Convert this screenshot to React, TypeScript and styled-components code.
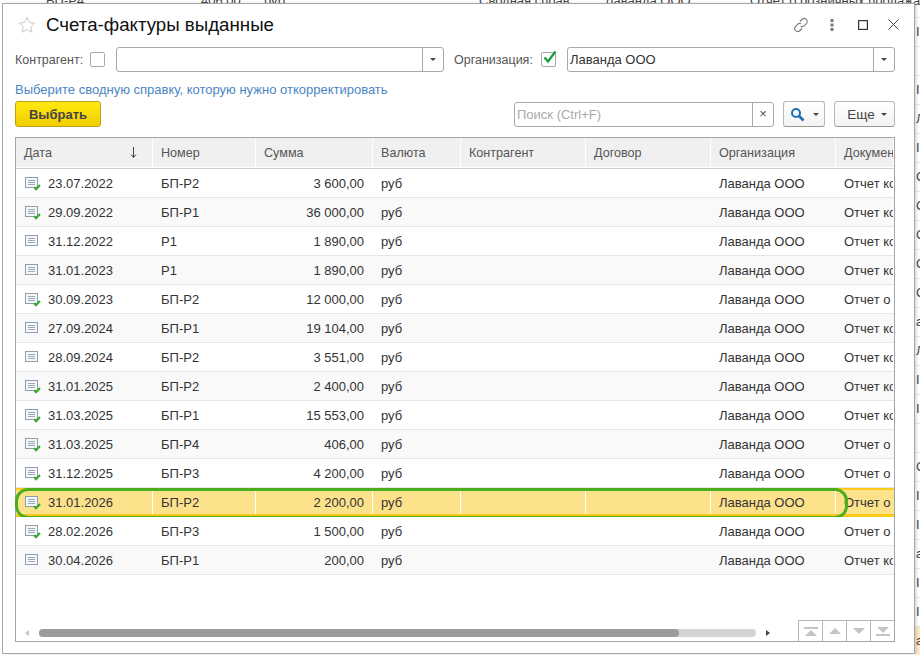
import styled, { createGlobalStyle } from "styled-components";

const GlobalStyle = createGlobalStyle`
  html, body {
    margin: 0;
    padding: 0;
    width: 920px;
    height: 655px;
    overflow: hidden;
    background: #fff;
    font-family: "Liberation Sans", Arial, sans-serif;
    font-size: 13px;
    color: #333;
  }
`;

const columns = [137, 103, 117, 88, 125, 125, 125, 58];

const rows = [
  { date: "23.07.2022", num: "БП-Р2", sum: "3 600,00", doc: "Отчет ко", posted: true },
  { date: "29.09.2022", num: "БП-Р1", sum: "36 000,00", doc: "Отчет ко", posted: true },
  { date: "31.12.2022", num: "Р1", sum: "1 890,00", doc: "Отчет ко", posted: false },
  { date: "31.01.2023", num: "Р1", sum: "1 890,00", doc: "Отчет ко", posted: false },
  { date: "30.09.2023", num: "БП-Р2", sum: "12 000,00", doc: "Отчет о", posted: true },
  { date: "27.09.2024", num: "БП-Р1", sum: "19 104,00", doc: "Отчет ко", posted: false },
  { date: "28.09.2024", num: "БП-Р2", sum: "3 551,00", doc: "Отчет ко", posted: false },
  { date: "31.01.2025", num: "БП-Р2", sum: "2 400,00", doc: "Отчет ко", posted: true },
  { date: "31.03.2025", num: "БП-Р1", sum: "15 553,00", doc: "Отчет ко", posted: true },
  { date: "31.03.2025", num: "БП-Р4", sum: "406,00", doc: "Отчет о", posted: true },
  { date: "31.12.2025", num: "БП-Р3", sum: "4 200,00", doc: "Отчет о", posted: true },
  { date: "31.01.2026", num: "БП-Р2", sum: "2 200,00", doc: "Отчет о", posted: true, selected: true },
  { date: "28.02.2026", num: "БП-Р3", sum: "1 500,00", doc: "Отчет о", posted: true },
  { date: "30.04.2026", num: "БП-Р1", sum: "200,00", doc: "Отчет ко", posted: false },
];

const sheetEdge = ["", "I,", "", "I,", "Л", "I,", "С", "С", "С", "С", "С", "а", "Л", "I,", "I,", "", "С", "I,", "I,", "а", "I,", "I,", "а"];

function DocIcon({ posted }: { posted: boolean }) {
  return (
    <svg width="16" height="14" viewBox="0 0 16 14">
      <rect x="0.5" y="0.5" width="12" height="10" fill="#f5f7f9" stroke="#8e9db0" />
      <path d="M3 3.5h7M3 5.5h7M3 7.5h7" stroke="#9aa8b8" />
      {posted && <path d="M9.2 10.2l1.8 2L15 8" fill="none" stroke="#35a82a" strokeWidth="2" />}
    </svg>
  );
}

function NavTriangle({ up }: { up?: boolean }) {
  return (
    <svg width="12" height="6" viewBox="0 0 12 6">
      <path d={up ? "M0 6L6 0L12 6Z" : "M0 0L6 6L12 0Z"} fill="currentColor" />
    </svg>
  );
}

function App() {
  return (
    <>
      <GlobalStyle />
      <Desktop>
        <SheetRow>
          <SheetCell $w={46} />
          <SheetCell $w={155}>БП-Р4</SheetCell>
          <SheetCell $w={63}>406,00</SheetCell>
          <SheetCell $w={215}>руб</SheetCell>
          <SheetCell $w={126}>Сводная справ</SheetCell>
          <SheetCell $w={145}>Лаванда ООО</SheetCell>
          <SheetCell $w={170}>Отчет о розничных продажа</SheetCell>
        </SheetRow>
        <SheetEdge>
          {sheetEdge.map((text, i) => (
            <EdgeCell key={i} $hot={i === 22}>
              {text}
            </EdgeCell>
          ))}
        </SheetEdge>
        <Window>
          <TitleBar>
            <StarIcon width="18" height="18" viewBox="0 0 18 18">
              <path
                d="M9 1.5l2.3 5 5.4.6-4 3.7 1.1 5.4L9 13.5l-4.8 2.7 1.1-5.4-4-3.7 5.4-.6z"
                fill="none"
                stroke="#c9c9c9"
              />
            </StarIcon>
            <Title>Счета-фактуры выданные</Title>
            <TitleIcons>
              <TitleIcon>
                <svg width="16" height="16" viewBox="0 0 16 16" fill="none" stroke="#777" strokeWidth="1.1">
                  <path d="M7 4.5l2-2a3 3 0 0 1 4.4 4.2l-2 2a3 3 0 0 1-3.6.5" />
                  <path d="M9 11.5l-2 2a3 3 0 0 1-4.4-4.2l2-2a3 3 0 0 1 3.6-.5" />
                </svg>
              </TitleIcon>
              <TitleIcon>
                <svg width="4" height="12" viewBox="0 0 4 12" fill="#777">
                  <rect x="0.5" y="0" width="3" height="3" />
                  <rect x="0.5" y="4.5" width="3" height="3" />
                  <rect x="0.5" y="9" width="3" height="3" />
                </svg>
              </TitleIcon>
              <TitleIcon>
                <svg width="10" height="10" viewBox="0 0 10 10" fill="none" stroke="#333" strokeWidth="1.2">
                  <rect x="0.6" y="0.6" width="8.8" height="8.8" />
                </svg>
              </TitleIcon>
              <TitleIcon>
                <svg width="11" height="11" viewBox="0 0 11 11" fill="none" stroke="#444" strokeWidth="1">
                  <path d="M0.5 0.5l10 10M10.5 0.5l-10 10" />
                </svg>
              </TitleIcon>
            </TitleIcons>
          </TitleBar>

          <FilterRow>
            <FieldLabel $w={75}>Контрагент:</FieldLabel>
            <CheckBox />
            <ComboBox>
              <ComboValue />
              <ComboArrow>
                <SmallCaret />
              </ComboArrow>
            </ComboBox>
            <FieldLabel $w={87} $ml={10}>
              Организация:
            </FieldLabel>
            <CheckBox>
              <CheckMark width="16" height="15" viewBox="0 0 16 15">
                <path d="M2.5 7.5l3.5 4L13.5 1.5" fill="none" stroke="#0f9d3a" strokeWidth="2.2" />
              </CheckMark>
            </CheckBox>
            <ComboBox>
              <ComboValue>Лаванда ООО</ComboValue>
              <ComboArrow>
                <SmallCaret />
              </ComboArrow>
            </ComboBox>
          </FilterRow>

          <Hint>Выберите сводную справку, которую нужно откорректировать</Hint>

          <Toolbar>
            <PrimaryButton>Выбрать</PrimaryButton>
            <SearchBox>
              <SearchInput>Поиск (Ctrl+F)</SearchInput>
              <SearchClear>×</SearchClear>
            </SearchBox>
            <ToolButton $w={42}>
              <svg width="15" height="15" viewBox="0 0 15 15" fill="none" stroke="#1f6fb5">
                <circle cx="6" cy="6" r="4" strokeWidth="2" />
                <path d="M9 9l4.5 4.5" strokeWidth="2.6" />
              </svg>
              <SmallCaret />
            </ToolButton>
            <ToolButton $w={61} $pl={5}>
              Еще
              <SmallCaret />
            </ToolButton>
          </Toolbar>

          <Table>
            <HeaderRow>
              {["Дата", "Номер", "Сумма", "Валюта", "Контрагент", "Договор", "Организация", "Документ"].map((h, i) => (
                <HeaderCell key={h} $w={columns[i]}>
                  {h}
                  {i === 0 && (
                    <SortArrow width="7" height="11" viewBox="0 0 7 11" fill="none" stroke="#444">
                      <path d="M3.5 0v10M1 7.5l2.5 3 2.5-3" />
                    </SortArrow>
                  )}
                </HeaderCell>
              ))}
            </HeaderRow>
            <Body>
              {rows.map((r, i) => (
                <Row key={i} $alt={i % 2 === 1} $selected={r.selected}>
                  <Cell $w={columns[0]} $selected={r.selected}>
                    <RowIcon>
                      <DocIcon posted={r.posted} />
                    </RowIcon>
                    {r.date}
                  </Cell>
                  <Cell $w={columns[1]} $selected={r.selected}>
                    {r.num}
                  </Cell>
                  <Cell $w={columns[2]} $selected={r.selected} $right>
                    {r.sum}
                  </Cell>
                  <Cell $w={columns[3]} $selected={r.selected}>
                    руб
                  </Cell>
                  <Cell $w={columns[4]} $selected={r.selected} />
                  <Cell $w={columns[5]} $selected={r.selected} />
                  <Cell $w={columns[6]} $selected={r.selected}>
                    Лаванда ООО
                  </Cell>
                  <Cell $w={columns[7]}>{r.doc}</Cell>
                  {r.selected && <SelectionMark />}
                </Row>
              ))}
            </Body>
            <Footer>
              <ScrollLeft />
              <ScrollTrack>
                <ScrollThumb />
              </ScrollTrack>
              <ScrollRight />
              <NavGroup>
                <NavButton>
                  <NavBar />
                  <NavTriangle up />
                </NavButton>
                <NavButton>
                  <NavTriangle up />
                </NavButton>
                <NavButton>
                  <NavTriangle />
                </NavButton>
                <NavButton>
                  <NavTriangle />
                  <NavBar />
                </NavButton>
              </NavGroup>
            </Footer>
          </Table>
        </Window>
      </Desktop>
    </>
  );
}

export default App;

const Desktop = styled.div`
  position: relative;
  width: 920px;
  height: 655px;
  overflow: hidden;
  background: #fff;
`;

const SheetRow = styled.div`
  display: flex;
  height: 3px;
  line-height: 0;
  color: #444;
  white-space: nowrap;
`;

const SheetCell = styled.div<{ $w: number }>`
  flex: 0 0 ${(p) => p.$w}px;
  margin-top: 1px;
`;

const SheetEdge = styled.div`
  position: absolute;
  left: 915px;
  top: -11px;
  width: 5px;
  overflow: hidden;
`;

const EdgeCell = styled.div<{ $hot?: boolean }>`
  height: 28px;
  line-height: 28px;
  padding-left: 1px;
  border-bottom: 1px solid #e6e6e6;
  color: #444;
  background: ${(p) => (p.$hot ? "#fbe9c8" : "transparent")};
`;

const Window = styled.div`
  position: absolute;
  left: 2px;
  top: 3px;
  width: 913px;
  height: 651px;
  box-sizing: border-box;
  display: flex;
  flex-direction: column;
  padding-left: 12px;
  background: #fff;
  border: 1px solid #a6a6a6;
  box-shadow: 2px 0 2px rgba(0, 0, 0, 0.12);
`;

const TitleBar = styled.div`
  display: flex;
  align-items: center;
  height: 43px;
  padding-bottom: 2px;
  box-sizing: border-box;
  flex: none;
`;

const StarIcon = styled.svg`
  margin-left: 3px;
  flex: none;
`;

const Title = styled.h1`
  margin: 0 0 0 10px;
  font-size: 18.7px;
  font-weight: 400;
  color: #111;
`;

const TitleIcons = styled.div`
  margin-left: auto;
  margin-right: 5px;
  display: flex;
  align-items: center;
`;

const TitleIcon = styled.span`
  display: flex;
  align-items: center;
  justify-content: center;
  width: 31px;
`;

const FilterRow = styled.div`
  display: flex;
  align-items: center;
  height: 25px;
  flex: none;
`;

const FieldLabel = styled.label<{ $w: number; $ml?: number }>`
  flex: none;
  width: ${(p) => p.$w}px;
  margin-left: ${(p) => p.$ml ?? 0}px;
  font-size: 12.5px;
  color: #555;
`;

const CheckBox = styled.span`
  position: relative;
  width: 13px;
  height: 13px;
  flex: none;
  background: #fff;
  border: 1px solid #a9a9a9;
  border-radius: 2px;
`;

const CheckMark = styled.svg`
  position: absolute;
  left: 0;
  top: -3px;
`;

const ComboBox = styled.div`
  display: flex;
  width: 328px;
  height: 25px;
  margin-left: 11px;
  box-sizing: border-box;
  background: #fff;
  border: 1px solid #a9a9a9;
  border-radius: 3px;
`;

const ComboValue = styled.div`
  flex: 1;
  padding-left: 2px;
  line-height: 23px;
  color: #333;
`;

const ComboArrow = styled.div`
  width: 20px;
  display: flex;
  align-items: center;
  justify-content: center;
  border-left: 1px solid #a9a9a9;
`;

const SmallCaret = styled.span`
  width: 0;
  height: 0;
  border-left: 3.5px solid transparent;
  border-right: 3.5px solid transparent;
  border-top: 3.5px solid #444;
`;

const Hint = styled.div`
  flex: none;
  height: 29px;
  line-height: 35px;
  color: #4c85c4;
`;

const Toolbar = styled.div`
  display: flex;
  align-items: center;
  height: 26px;
  flex: none;
  margin-right: 19px;
`;

const PrimaryButton = styled.button`
  width: 86px;
  height: 26px;
  padding: 0;
  font: bold 13px "Liberation Sans", Arial, sans-serif;
  color: #444;
  background: linear-gradient(#ffe90f, #f2cd00);
  border: 1px solid #b8a01e;
  border-radius: 3px;
`;

const SearchBox = styled.div`
  display: flex;
  width: 260px;
  height: 25px;
  margin-left: auto;
  box-sizing: border-box;
  border: 1px solid #a9a9a9;
  border-radius: 3px;
`;

const SearchInput = styled.div`
  flex: 1;
  padding-left: 2px;
  line-height: 23px;
  color: #a9a9a9;
`;

const SearchClear = styled.div`
  width: 20px;
  text-align: center;
  line-height: 21px;
  color: #555;
  border-left: 1px solid #a9a9a9;
`;

const ToolButton = styled.button<{ $w: number; $pl?: number }>`
  display: flex;
  align-items: center;
  justify-content: center;
  gap: ${(p) => (p.$pl ? 6 : 8)}px;
  width: ${(p) => p.$w}px;
  height: 26px;
  margin-left: 9px;
  padding: 0 0 0 ${(p) => p.$pl ?? 0}px;
  font: 13.5px "Liberation Sans", Arial, sans-serif;
  color: #444;
  background: linear-gradient(#fff, #f3f3f3);
  border: 1px solid #b9b9b9;
  border-bottom-color: #999;
  border-radius: 3px;
`;

const Table = styled.div`
  display: flex;
  flex-direction: column;
  width: 878px;
  height: 503px;
  margin-top: 10px;
  flex: none;
  border: 1px solid #a6a6a6;
`;

const HeaderRow = styled.div`
  display: flex;
  height: 30px;
  flex: none;
  border-bottom: 1px solid #cfcfcf;
`;

const HeaderCell = styled.div<{ $w: number }>`
  position: relative;
  flex: 0 0 ${(p) => p.$w}px;
  box-sizing: border-box;
  padding-left: 8px;
  font-size: 12.6px;
  line-height: 30px;
  white-space: nowrap;
  overflow: hidden;
  color: #555;
  background: #f0f0f0;
  border-right: 1px solid #fff;
  border-bottom: 1px solid #fff;
`;

const SortArrow = styled.svg`
  position: absolute;
  right: 15px;
  top: 9px;
`;

const Body = styled.div`
  flex: 1;
`;

const Row = styled.div<{ $alt?: boolean; $selected?: boolean }>`
  position: relative;
  display: flex;
  height: 29px;
  box-sizing: border-box;
  background: ${(p) => (p.$selected ? "#fde28c" : p.$alt ? "#f9f9f9" : "#fff")};
  border-bottom: ${(p) => (p.$selected ? "3px solid #fdc91a" : "1px solid #e6e6e6")};
  ${(p) => p.$selected && "border-top: 2px solid #fdc91a;"}
`;

const Cell = styled.div<{ $w: number; $right?: boolean; $selected?: boolean }>`
  display: flex;
  align-items: center;
  justify-content: ${(p) => (p.$right ? "flex-end" : "flex-start")};
  flex: 0 0 ${(p) => p.$w}px;
  box-sizing: border-box;
  padding: 0 8px;
  white-space: nowrap;
  overflow: hidden;
  color: #333;
  border-right: 1px solid ${(p) => (p.$selected ? "#fff" : "transparent")};
`;

const RowIcon = styled.span`
  display: flex;
  margin: 1px 7px 0 1px;
`;

const SelectionMark = styled.div`
  position: absolute;
  left: -1px;
  top: -2px;
  width: 827px;
  height: 25px;
  border: 3px solid #4cae1f;
  border-radius: 13px;
  pointer-events: none;
`;

const Footer = styled.div`
  display: flex;
  align-items: flex-end;
  height: 20px;
  flex: none;
  padding-left: 9px;
`;

const ScrollLeft = styled.span`
  width: 0;
  height: 0;
  margin-bottom: 5px;
  margin-right: 10px;
  border-top: 3px solid transparent;
  border-bottom: 3px solid transparent;
  border-right: 4px solid #c4c4c4;
`;

const ScrollRight = styled.span`
  width: 0;
  height: 0;
  margin-bottom: 5px;
  margin-left: 10px;
  border-top: 3px solid transparent;
  border-bottom: 3px solid transparent;
  border-left: 4px solid #444;
`;

const ScrollTrack = styled.div`
  width: 717px;
  height: 8px;
  margin-bottom: 4px;
  background: #d4d4d4;
  border-radius: 4px;
`;

const ScrollThumb = styled.div`
  width: 640px;
  height: 8px;
  background: #9b9b9b;
  border-radius: 4px;
`;

const NavGroup = styled.div`
  display: flex;
  margin-left: auto;
`;

const NavButton = styled.div`
  display: flex;
  flex-direction: column;
  align-items: center;
  justify-content: center;
  gap: 1px;
  width: 24px;
  height: 21px;
  box-sizing: border-box;
  color: #c4c4c4;
  border-top: 1px solid #b5b5b5;
  border-left: 1px solid #b5b5b5;
`;

const NavBar = styled.span`
  width: 14px;
  height: 2px;
  background: #c4c4c4;
`;
